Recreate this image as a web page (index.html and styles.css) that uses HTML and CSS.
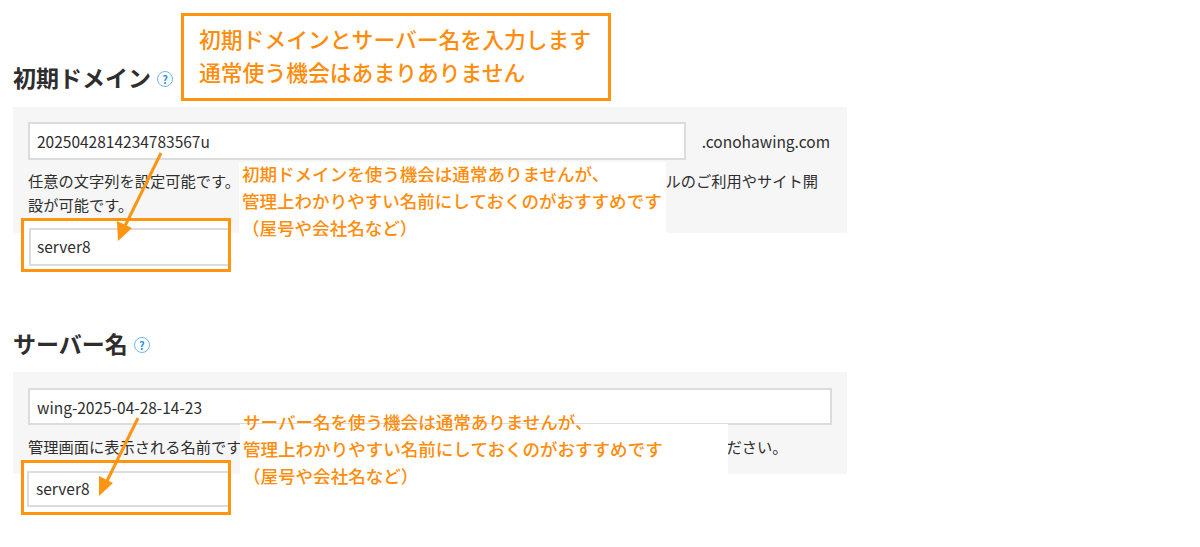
FILE: index.html
```html
<!DOCTYPE html>
<html lang="ja">
<head>
    <meta charset="UTF-8">
    <title>初期ドメインとサーバー名</title>
    <link rel="stylesheet" href="styles.css">
</head>
<body>
   <main class="page">
    <section class="field">
        <h2 class="fieldTitle">初期ドメイン<span class="help">?</span></h2>
        <div class="panel">
            <div class="inputRow">
                <input class="textInput" type="text" value="2025042814234783567u">
                <span class="suffix">.conohawing.com</span>
            </div>
            <p class="note">任意の文字列を設定可能です。この初期ドメインを利用して、サーバー契約完了後すぐにメールのご利用やサイト開設が可能です。</p>
        </div>
    </section>

    <section class="field">
        <h2 class="fieldTitle">サーバー名<span class="help">?</span></h2>
        <div class="panel panelShort">
            <input class="textInput" type="text" value="wing-2025-04-28-14-23">
            <p class="note">管理画面に表示される名前です。サーバーを区別しやすいよう、自分がわかりやすい名前を入力してください。</p>
        </div>
    </section>

    <!-- annotations on top of the screenshot -->
    <div class="callout">初期ドメインとサーバー名を入力します<br>通常使う機会はあまりありません</div>

    <div class="memo memoDomain">
        <div class="memoText">初期ドメインを使う機会は通常ありませんが、<br>管理上わかりやすい名前にしておくのがおすすめです<br>（屋号や会社名など）</div>
    </div>
    <div class="memo memoServer">
        <div class="memoText">サーバー名を使う機会は通常ありませんが、<br>管理上わかりやすい名前にしておくのがおすすめです<br>（屋号や会社名など）</div>
    </div>

    <div class="sample sampleDomain"><div class="sampleInput">server8</div></div>
    <div class="sample sampleServer"><div class="sampleInput">server8</div></div>

    <svg class="arrows" width="1200" height="547" viewBox="0 0 1200 547">
        <line x1="161" y1="153" x2="125" y2="226" />
        <polygon points="118,241 117,221 132,228" />
        <line x1="138" y1="418" x2="107" y2="481" />
        <polygon points="99,496 99,476 113,483" />
    </svg>
   </main>
</body>
</html>
```

FILE: styles.css
```css
body{
    margin: 0px;
    background: white;
    font-family: "Noto Sans CJK JP", "Noto Sans", sans-serif;
    color: #2e2e2e;
}
.page{
    position: relative;
    width: 847px;
    height: 547px;
    padding: 62px 0px 0px 13px;
    box-sizing: border-box;
}
.field{
    margin-bottom: 95px;
}
.fieldTitle{
    margin: 0px;
    font-size: 23px;
    line-height: 30px;
    font-weight: 700;
    display: flex;
    align-items: center;
}
.help{
    width: 14px;
    height: 14px;
    margin: 4px 0px 0px 6px;
    border: 1px solid #6fb6ee;
    border-radius: 50%;
    color: #2f8fe0;
    font-size: 11px;
    line-height: 14px;
    font-weight: 700;
    text-align: center;
}
.panel{
    margin-top: 15px;
    padding: 15px 15px 16px;
    height: 95px;
    background: #f6f6f6;
}
.panelShort{
    margin-top: 14px;
    height: 70px;
    padding-top: 16px;
}
.inputRow{
    display: flex;
    align-items: center;
    gap: 16px;
    padding-right: 2px;
}
.textInput{
    display: block;
    flex: 1;
    width: 100%;
    height: 38px;
    margin: 0px;
    padding: 0px 7px;
    box-sizing: border-box;
    border: 2px solid #dcdcdc;
    border-radius: 0px;
    background: white;
    color: #2e2e2e;
    font-family: inherit;
    font-size: 15.5px;
    outline: none;
}
.panelShort .textInput{
    height: 37px;
}
.suffix{
    font-size: 15.5px;
}
.note{
    margin: 8px 0px 0px;
    font-size: 15.25px;
    line-height: 24px;
}
.panelShort .note{
    margin-top: 9px;
}
.callout{
    position: absolute;
    left: 181px;
    top: 13px;
    width: 430px;
    height: 88px;
    padding: 6px 15px;
    box-sizing: border-box;
    border: 3px solid #ff9410;
    background: white;
    color: #ff8c0a;
    font-size: 21.8px;
    line-height: 33px;
    font-weight: 500;
    white-space: nowrap;
}
.memo{
    position: absolute;
    background: white;
    color: #ff8c0a;
    font-size: 17.55px;
    line-height: 27px;
    font-weight: 500;
    white-space: nowrap;
}
.memoDomain{
    left: 239px;
    top: 162px;
    width: 424px;
    height: 71px;
    padding-left: 3px;
}
.memoServer{
    left: 240px;
    top: 424px;
    width: 485px;
    height: 50px;
    padding-left: 3px;
}
.memoDomain .memoText{
    margin-top: -2px;
}
.memoServer .memoText{
    margin-top: -16px;
}
.sample{
    position: absolute;
    left: 21px;
    width: 210px;
    height: 54px;
    box-sizing: border-box;
    border: 3px solid #ff9410;
    background: white;
    padding: 7px 0px 0px 5px;
}
.sampleDomain{
    top: 218px;
}
.sampleServer{
    top: 460px;
    height: 55px;
    padding: 8px 0px 0px 3px;
}
.sampleInput{
    height: 38px;
    box-sizing: border-box;
    border: 2px solid #dcdcdc;
    border-right: none;
    padding-left: 6px;
    font-size: 15.5px;
    line-height: 32px;
}
.sampleServer .sampleInput{
    height: 36px;
    padding-left: 7px;
    line-height: 30px;
}
.arrows{
    position: absolute;
    left: 0px;
    top: 0px;
}
.arrows line{
    stroke: #ff9410;
    stroke-width: 3;
}
.arrows polygon{
    fill: #ff9410;
}
```
